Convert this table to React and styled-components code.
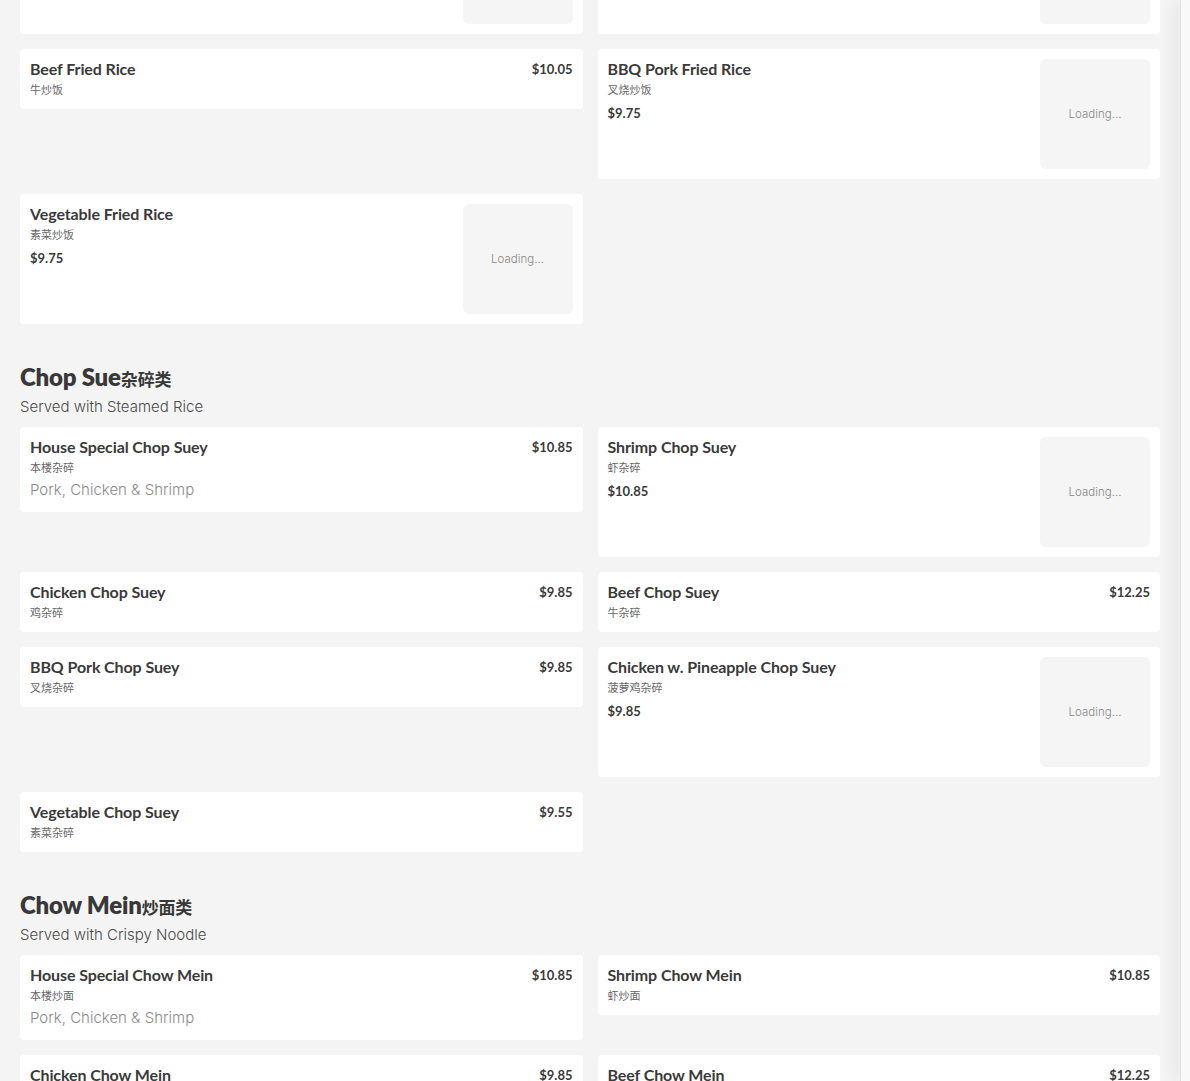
import React from "react";
import styled, { createGlobalStyle } from "styled-components";

const GlobalStyle = createGlobalStyle`
  html, body {
    margin: 0;
    padding: 0;
    background: #f4f4f4;
    overflow: hidden;
  }
  * {
    box-sizing: border-box;
  }
`;

const MENU = [
  {
    title: "Fried Rice",
    cn: "炒饭类",
    subtitle: "Served with Egg Roll",
    items: [
      { name: "Chicken Fried Rice", cn: "鸡炒饭", price: "$9.75", image: true },
      { name: "Shrimp Fried Rice", cn: "虾炒饭", price: "$10.05", image: true },
      { name: "Beef Fried Rice", cn: "牛炒饭", price: "$10.05" },
      { name: "BBQ Pork Fried Rice", cn: "叉烧炒饭", price: "$9.75", image: true },
      { name: "Vegetable Fried Rice", cn: "素菜炒饭", price: "$9.75", image: true },
    ],
  },
  {
    title: "Chop Sue",
    cn: "杂碎类",
    subtitle: "Served with Steamed Rice",
    items: [
      {
        name: "House Special Chop Suey",
        cn: "本楼杂碎",
        price: "$10.85",
        desc: "Pork, Chicken & Shrimp",
      },
      { name: "Shrimp Chop Suey", cn: "虾杂碎", price: "$10.85", image: true },
      { name: "Chicken Chop Suey", cn: "鸡杂碎", price: "$9.85" },
      { name: "Beef Chop Suey", cn: "牛杂碎", price: "$12.25" },
      { name: "BBQ Pork Chop Suey", cn: "叉烧杂碎", price: "$9.85" },
      {
        name: "Chicken w. Pineapple Chop Suey",
        cn: "菠萝鸡杂碎",
        price: "$9.85",
        image: true,
      },
      { name: "Vegetable Chop Suey", cn: "素菜杂碎", price: "$9.55" },
    ],
  },
  {
    title: "Chow Mein",
    cn: "炒面类",
    subtitle: "Served with Crispy Noodle",
    items: [
      {
        name: "House Special Chow Mein",
        cn: "本楼炒面",
        price: "$10.85",
        desc: "Pork, Chicken & Shrimp",
      },
      { name: "Shrimp Chow Mein", cn: "虾炒面", price: "$10.85" },
      { name: "Chicken Chow Mein", cn: "鸡炒面", price: "$9.85" },
      { name: "Beef Chow Mein", cn: "牛炒面", price: "$12.25" },
    ],
  },
];

// the menu is shown scrolled down, so the first section sits above the fold
const Page = styled.div`
  display: flex;
  height: 1081px;
  overflow: hidden;
`;

const Main = styled.main`
  flex: 1;
  padding: 0 20px;
  margin-top: -199px;
  font-family: Inter, "Noto Sans", sans-serif;
`;

const SidePanel = styled.aside`
  width: 10px;
  flex-shrink: 0;
  background: #f9f9f9;
  border-left: 1px solid #e0e0e0;
  box-shadow: -6px 0 16px rgba(0, 0, 0, 0.07);
`;

const Section = styled.section`
  padding-top: 38px;
`;

const SectionTitle = styled.h2`
  margin: 0;
  height: 30px;
  font-family: Lato, sans-serif;
  font-weight: 800;
  font-size: 24px;
  line-height: 30px;
  color: #383838;
  letter-spacing: -0.2px;
`;

const TitleCn = styled.span`
  font-family: "Noto Sans CJK SC", sans-serif;
  font-weight: 700;
  font-size: 17px;
  line-height: 1;
`;

const SectionSubtitle = styled.p`
  margin: 5px 0 10px;
  font-size: 15px;
  line-height: 20px;
  font-weight: 300;
  color: #4a4a4a;
`;

const Grid = styled.div`
  display: grid;
  grid-template-columns: 1fr 1fr;
  gap: 15px;
  align-items: start;
`;

const Card = styled.div`
  display: flex;
  gap: 10px;
  padding: 10px;
  background: #fff;
  border-radius: 4px;
  min-height: ${(p) => (p.$image ? "130px" : "auto")};
`;

const Info = styled.div`
  flex: 1;
  min-width: 0;
`;

const TopRow = styled.div`
  display: flex;
  justify-content: space-between;
  align-items: flex-start;
  height: 20px;
`;

const Name = styled.div`
  font-family: Lato, sans-serif;
  font-weight: 700;
  font-size: 16px;
  line-height: 20px;
  color: #3a3a3a;
  letter-spacing: -0.1px;
`;

const Price = styled.div`
  font-family: Lato, sans-serif;
  font-weight: 700;
  font-size: 13px;
  line-height: 20px;
  color: #3a3a3a;
  margin-top: ${(p) => (p.$below ? "4px" : "0")};
`;

const ChineseName = styled.div`
  font-family: "Noto Sans CJK SC", sans-serif;
  font-size: 11px;
  height: 20px;
  line-height: 20px;
  color: #666;
`;

const Description = styled.div`
  font-size: 15px;
  line-height: 25px;
  font-weight: 300;
  color: #8a8a8a;
`;

const Thumb = styled.div`
  width: 110px;
  height: 110px;
  flex-shrink: 0;
  border-radius: 6px;
  background: #f5f5f5;
  display: flex;
  align-items: center;
  justify-content: center;
  font-size: 11.5px;
  font-weight: 300;
  color: #888;
`;

const MenuCard = ({ item }) => (
  <Card $image={item.image}>
    <Info>
      <TopRow>
        <Name>{item.name}</Name>
        {!item.image && <Price>{item.price}</Price>}
      </TopRow>
      <ChineseName>{item.cn}</ChineseName>
      {item.image && <Price $below>{item.price}</Price>}
      {item.desc && <Description>{item.desc}</Description>}
    </Info>
    {item.image && <Thumb>Loading...</Thumb>}
  </Card>
);

export default function App() {
  return (
    <>
      <GlobalStyle />
      <Page>
        <Main>
          {MENU.map((section) => (
            <Section key={section.title}>
              <SectionTitle>
                {section.title}
                <TitleCn>{section.cn}</TitleCn>
              </SectionTitle>
              <SectionSubtitle>{section.subtitle}</SectionSubtitle>
              <Grid>
                {section.items.map((item) => (
                  <MenuCard key={item.name} item={item} />
                ))}
              </Grid>
            </Section>
          ))}
        </Main>
        <SidePanel />
      </Page>
    </>
  );
}
